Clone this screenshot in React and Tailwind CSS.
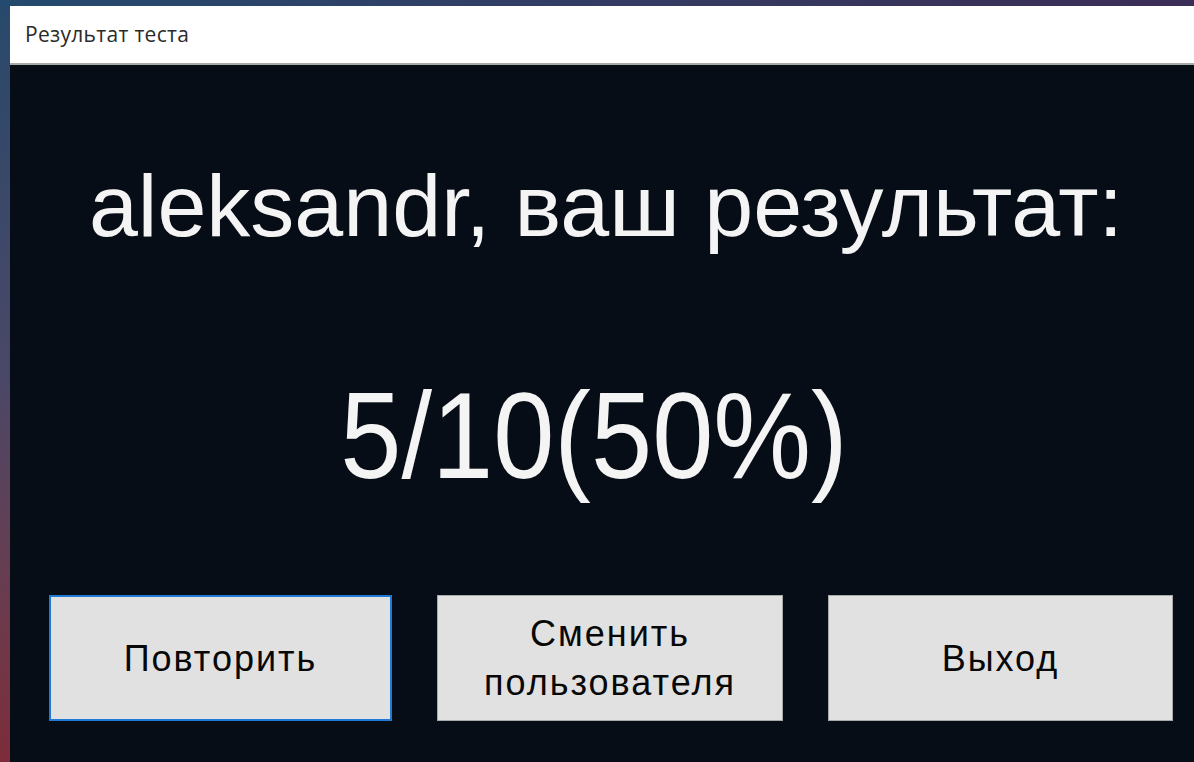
const buttons = [
  { label: 'Повторить', width: 'w-[343px]', focused: true },
  { label: 'Сменить пользователя', width: 'w-[346px]', lines: ['Сменить', 'пользователя'] },
  { label: 'Выход', width: 'w-[345px]' },
];

function ResultButton({ label, lines, width, focused }) {
  return (
    <button
      type="button"
      className={`${width} h-[126px] shrink-0 flex flex-col items-center justify-center bg-[#e1e1e1] text-[#080808] text-[36px] leading-[49px] tracking-[2px] ${
        focused ? 'border-2 border-[#1f7ad6]' : 'border border-[#a9a9a9]'
      }`}
    >
      {lines ? lines.map((line) => <span key={line}>{line}</span>) : <span>{label}</span>}
    </button>
  );
}

export default function App() {
  return (
    <div className="h-[762px] w-[1194px] overflow-hidden bg-gradient-to-b from-[#27496c] via-[#4a4766] to-[#7d2c3a] font-['Liberation_Sans',Arial,sans-serif]">
      <div className="h-[6px] bg-gradient-to-r from-[#234a6e] to-[#3b2d57]" />
      <div className="ml-[10px] w-[1192px] flex flex-col h-[756px]">
        {/* title bar */}
        <div className="h-[59px] shrink-0 bg-white border-b-2 border-[#a7abab] flex items-center pl-[15px]">
          <span className="font-['Open_Sans','Noto_Sans',sans-serif] text-[21px] text-[#2a2a2a] tracking-[0.3px]">
            Результат теста
          </span>
        </div>

        {/* form body */}
        <div className="flex-1 bg-[#070d16] flex flex-col items-center">
          <h1 className="mt-[91px] text-[88px] leading-[100px] text-[#f4f4f4] whitespace-nowrap">
            aleksandr, ваш результат:
          </h1>
          <div className="mt-[115px] pr-[24px] text-[110px] leading-[130px] text-[#f4f4f4] whitespace-nowrap">
            <span className="inline-block scale-y-[1.11]">5/10(50%)</span>
          </div>
          <div className="mt-[94px] self-start pl-[39px] flex gap-[45px]">
            {buttons.map((b) => (
              <ResultButton key={b.label} {...b} />
            ))}
          </div>
        </div>
      </div>
    </div>
  );
}
